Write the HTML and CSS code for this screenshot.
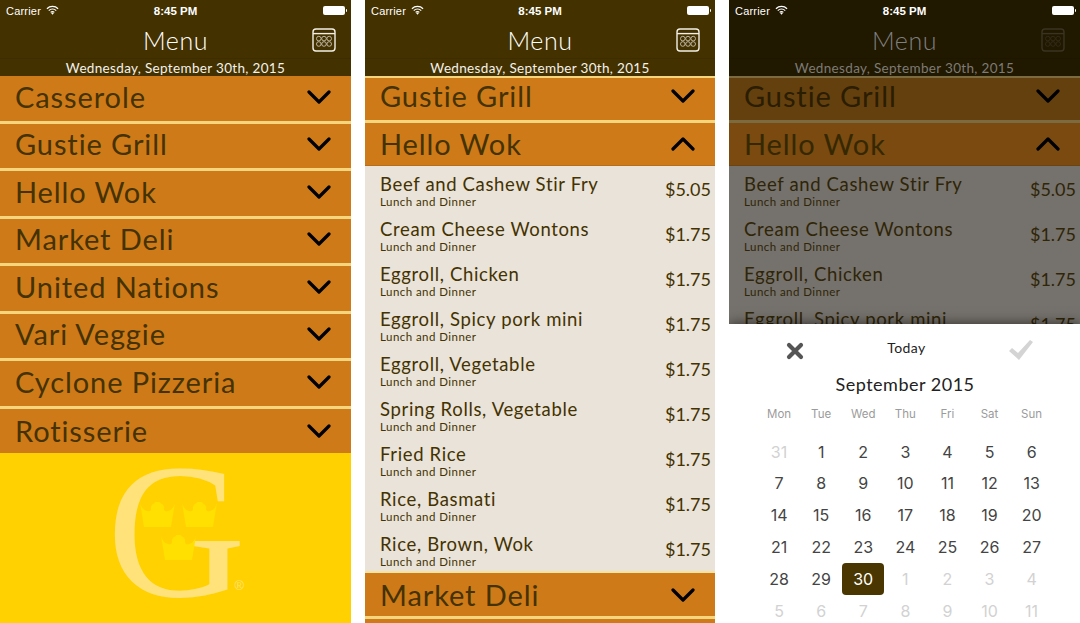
FILE: index.html
```html
<!DOCTYPE html>
<html lang="en">
<head>
<meta charset="utf-8">
<title>Menu</title>
<link rel="stylesheet" href="styles.css">
</head>
<body>
<svg class="defs" width="0" height="0" aria-hidden="true">
  <symbol id="chev-down" viewBox="0 0 24 14"><path d="M2 2 L12 12 L22 2" fill="none" stroke="#000" stroke-width="3.2" stroke-linecap="round" stroke-linejoin="round"/></symbol>
  <symbol id="chev-up" viewBox="0 0 24 14"><path d="M2 12 L12 2 L22 12" fill="none" stroke="#000" stroke-width="3.2" stroke-linecap="round" stroke-linejoin="round"/></symbol>
  <symbol id="wifi" viewBox="0 0 14 10"><path d="M1 3.6 A8.5 8.5 0 0 1 13 3.6 M3 5.6 A5.6 5.6 0 0 1 11 5.6 M5 7.5 A2.8 2.8 0 0 1 9 7.5" fill="none" stroke="#fff" stroke-width="1.3"/><path d="M7 10 L5.6 8.4 A2 2 0 0 1 8.4 8.4 Z" fill="#fff"/></symbol>
  <symbol id="cal" viewBox="0 0 24 24"><rect x="1" y="1" width="22" height="22" rx="3" fill="none" stroke="currentColor" stroke-width="1.4"/><path d="M1 5.6 H23" stroke="currentColor" stroke-width="1.4"/><g fill="none" stroke="currentColor" stroke-width=".8" opacity=".85"><circle cx="6.8" cy="10.6" r="2.3"/><circle cx="12" cy="10.6" r="2.3"/><circle cx="17.2" cy="10.6" r="2.3"/><circle cx="6.8" cy="16" r="2.3"/><circle cx="12" cy="16" r="2.3"/><circle cx="17.2" cy="16" r="2.3"/></g></symbol>
  <symbol id="crown" viewBox="0 0 35 26"><path d="M0 1 Q2 8 7 9 Q11 10 11 7 A4.4 4.4 0 0 1 14 1.6 A4.2 4.2 0 0 1 21 1.6 A4.4 4.4 0 0 1 24 7 Q24 10 28 9 Q33 8 35 1 L31 25 H4 Z" fill="#ffe000"/></symbol>
</svg>

<main class="screens">

  <section class="phone phone-wide">
    <header class="top">
      <div class="status"><span class="carrier">Carrier</span><svg class="wifi"><use href="#wifi"/></svg><span class="time">8:45 PM</span><span class="battery"></span></div>
      <div class="nav"><h1 class="nav-title">Menu</h1><svg class="cal-icon"><use href="#cal"/></svg></div>
      <div class="date">Wednesday, September 30th, 2015</div>
    </header>
    <div class="places">
      <div class="place"><span class="place-name">Casserole</span><svg class="chev"><use href="#chev-down"/></svg></div>
      <div class="place"><span class="place-name">Gustie Grill</span><svg class="chev"><use href="#chev-down"/></svg></div>
      <div class="place"><span class="place-name">Hello Wok</span><svg class="chev"><use href="#chev-down"/></svg></div>
      <div class="place"><span class="place-name">Market Deli</span><svg class="chev"><use href="#chev-down"/></svg></div>
      <div class="place"><span class="place-name">United Nations</span><svg class="chev"><use href="#chev-down"/></svg></div>
      <div class="place"><span class="place-name">Vari Veggie</span><svg class="chev"><use href="#chev-down"/></svg></div>
      <div class="place"><span class="place-name">Cyclone Pizzeria</span><svg class="chev"><use href="#chev-down"/></svg></div>
      <div class="place place-last"><span class="place-name">Rotisserie</span><svg class="chev"><use href="#chev-down"/></svg></div>
    </div>
    <div class="brand">
      <svg class="logo" viewBox="95 454 160 169" aria-label="Gustavus logo">
        <text class="logo-g" x="107" y="597">G</text>
        <text class="logo-r" x="234.500" y="591">®</text>
        <use href="#crown" x="140" y="503" width="35" height="26"/>
        <use href="#crown" x="182" y="503" width="35" height="26"/>
        <use href="#crown" x="161" y="536" width="35" height="26"/>
      </svg>
    </div>
  </section>

  <section class="phone phone-narrow">
    <header class="top">
      <div class="status"><span class="carrier">Carrier</span><svg class="wifi"><use href="#wifi"/></svg><span class="time">8:45 PM</span><span class="battery"></span></div>
      <div class="nav"><h1 class="nav-title">Menu</h1><svg class="cal-icon"><use href="#cal"/></svg></div>
      <div class="date">Wednesday, September 30th, 2015</div>
    </header>
    <div class="places places-scrolled">
      <div class="place place-clipped"><span class="place-name">Gustie Grill</span><svg class="chev"><use href="#chev-down"/></svg></div>
      <div class="place place-open"><span class="place-name">Hello Wok</span><svg class="chev"><use href="#chev-up"/></svg></div>
      <ul class="items">
        <li class="item"><div class="item-text"><span class="item-name">Beef and Cashew Stir Fry</span><span class="item-meal">Lunch and Dinner</span></div><span class="price">$5.05</span></li>
        <li class="item"><div class="item-text"><span class="item-name">Cream Cheese Wontons</span><span class="item-meal">Lunch and Dinner</span></div><span class="price">$1.75</span></li>
        <li class="item"><div class="item-text"><span class="item-name">Eggroll, Chicken</span><span class="item-meal">Lunch and Dinner</span></div><span class="price">$1.75</span></li>
        <li class="item"><div class="item-text"><span class="item-name">Eggroll, Spicy pork mini</span><span class="item-meal">Lunch and Dinner</span></div><span class="price">$1.75</span></li>
        <li class="item"><div class="item-text"><span class="item-name">Eggroll, Vegetable</span><span class="item-meal">Lunch and Dinner</span></div><span class="price">$1.75</span></li>
        <li class="item"><div class="item-text"><span class="item-name">Spring Rolls, Vegetable</span><span class="item-meal">Lunch and Dinner</span></div><span class="price">$1.75</span></li>
        <li class="item"><div class="item-text"><span class="item-name">Fried Rice</span><span class="item-meal">Lunch and Dinner</span></div><span class="price">$1.75</span></li>
        <li class="item"><div class="item-text"><span class="item-name">Rice, Basmati</span><span class="item-meal">Lunch and Dinner</span></div><span class="price">$1.75</span></li>
        <li class="item"><div class="item-text"><span class="item-name">Rice, Brown, Wok</span><span class="item-meal">Lunch and Dinner</span></div><span class="price">$1.75</span></li>
      </ul>
      <div class="place place-after"><span class="place-name">Market Deli</span><svg class="chev"><use href="#chev-down"/></svg></div>
      <div class="place"></div>
    </div>
  </section>

  <section class="phone phone-wide">
    <header class="top top-dim">
      <div class="status"><span class="carrier">Carrier</span><svg class="wifi"><use href="#wifi"/></svg><span class="time">8:45 PM</span><span class="battery"></span></div>
      <div class="nav"><h1 class="nav-title">Menu</h1><svg class="cal-icon"><use href="#cal"/></svg></div>
      <div class="date">Wednesday, September 30th, 2015</div>
    </header>
    <div class="places places-scrolled places-dim">
      <div class="place place-clipped"><span class="place-name">Gustie Grill</span><svg class="chev"><use href="#chev-down"/></svg></div>
      <div class="place place-open"><span class="place-name">Hello Wok</span><svg class="chev"><use href="#chev-up"/></svg></div>
      <ul class="items">
        <li class="item"><div class="item-text"><span class="item-name">Beef and Cashew Stir Fry</span><span class="item-meal">Lunch and Dinner</span></div><span class="price">$5.05</span></li>
        <li class="item"><div class="item-text"><span class="item-name">Cream Cheese Wontons</span><span class="item-meal">Lunch and Dinner</span></div><span class="price">$1.75</span></li>
        <li class="item"><div class="item-text"><span class="item-name">Eggroll, Chicken</span><span class="item-meal">Lunch and Dinner</span></div><span class="price">$1.75</span></li>
        <li class="item"><div class="item-text"><span class="item-name">Eggroll, Spicy pork mini</span><span class="item-meal">Lunch and Dinner</span></div><span class="price">$1.75</span></li>
      </ul>
    </div>
    <aside class="sheet">
      <div class="sheet-bar">
        <svg class="sheet-x" viewBox="0 0 18 18"><path d="M3 3 L15 15 M15 3 L3 15" fill="none" stroke="#555" stroke-width="4.200" stroke-linecap="round"/></svg>
        <span class="sheet-today">Today</span>
        <svg class="sheet-check" viewBox="0 0 24 20"><path d="M0 11 L3 8 L9 13 L21 0 L24 2 L10 20 Z" fill="#d4d4d4"/></svg>
      </div>
      <div class="month">September 2015</div>
      <div class="cal-grid">
        <span class="wd">Mon</span><span class="wd">Tue</span><span class="wd">Wed</span><span class="wd">Thu</span><span class="wd">Fri</span><span class="wd">Sat</span><span class="wd">Sun</span>
        <span class="day day-off">31</span><span class="day">1</span><span class="day">2</span><span class="day">3</span><span class="day">4</span><span class="day">5</span><span class="day">6</span>
        <span class="day">7</span><span class="day">8</span><span class="day">9</span><span class="day">10</span><span class="day">11</span><span class="day">12</span><span class="day">13</span>
        <span class="day">14</span><span class="day">15</span><span class="day">16</span><span class="day">17</span><span class="day">18</span><span class="day">19</span><span class="day">20</span>
        <span class="day">21</span><span class="day">22</span><span class="day">23</span><span class="day">24</span><span class="day">25</span><span class="day">26</span><span class="day">27</span>
        <span class="day">28</span><span class="day">29</span><span class="day day-sel">30</span><span class="day day-off">1</span><span class="day day-off">2</span><span class="day day-off">3</span><span class="day day-off">4</span>
        <span class="day day-off">5</span><span class="day day-off">6</span><span class="day day-off">7</span><span class="day day-off">8</span><span class="day day-off">9</span><span class="day day-off">10</span><span class="day day-off">11</span>
      </div>
    </aside>
  </section>

</main>
</body>
</html>
```

FILE: styles.css
```css
* { box-sizing: border-box; }
html, body { margin: 0; padding: 0; background: #fff; }
body { width: 1080px; height: 623px; overflow: hidden; font-family: "Lato", "Noto Sans", sans-serif; }
.defs { display: block; height: 0; }

.screens { display: flex; gap: 14px; height: 623px; }
.phone { position: relative; height: 623px; overflow: hidden; display: flex; flex-direction: column; background: #ffd100; }
.phone-wide { width: 351px; }
.phone-narrow { width: 350px; }

/* header */
.top { flex: none; height: 76px; background: #433100; color: #fff; position: relative; z-index: 1; }
.status { height: 21px; position: relative; display: flex; align-items: center; padding: 0 6px; font-family: "Liberation Sans", sans-serif; font-size: 11px; color: #fff; }
.carrier { letter-spacing: .2px; }
.wifi { width: 13px; height: 10px; margin-left: 5px; margin-top: -2px; }
.time { position: absolute; left: 0; right: 0; text-align: center; font-weight: 700; font-size: 11.500px; }
.battery { position: absolute; right: 6px; top: 6px; width: 22px; height: 9px; background: #fff; border-radius: 2px; }
.battery::after { content: ""; position: absolute; right: -2px; top: 3px; width: 1.500px; height: 3px; background: #fff; border-radius: 0 1px 1px 0; }
.nav { height: 38px; position: relative; display: flex; align-items: center; justify-content: center; border-bottom: 1px solid #3d2d00; }
.nav-title { margin: 0; font-size: 25px; font-weight: 300; line-height: 30px; letter-spacing: .6px; }
.cal-icon { position: absolute; right: 15px; top: 7px; width: 24px; height: 24px; color: #f3efe6; }
.date { height: 17px; line-height: 18px; text-align: center; font-size: 13.500px; letter-spacing: .33px; color: #f5f2ea; }

/* dimmed header in the third screen */
.top-dim { background: #211800; }
.top-dim .nav { border-bottom-color: #1e1600; }
.top-dim .nav-title { color: #7f7f7f; }
.top-dim .date { color: #7d7b76; }
.top-dim .cal-icon { color: #3a3322; }

/* restaurant rows */
.places { flex: none; }
.place { height: 47.500px; padding: 0 20px 3px 15px; background: #cf7a19; border-bottom: 3px solid #f6d67c; display: flex; align-items: center; justify-content: space-between; }
.place-last { height: 44.500px; padding-bottom: 0; border-bottom: 0; }
.place-name { font-size: 29px; font-weight: 400; letter-spacing: .9px; color: #443200; line-height: 36px; }
.chev { width: 24px; height: 14px; flex: none; }

.places-scrolled { border-top: 2px solid #f6d67c; }
.place-clipped { height: 45px; padding-bottom: 0; }
.place-clipped .place-name { margin-top: -6px; }
.place-clipped .chev { margin-top: -6px; }
.place-open { height: 43px; padding-bottom: 0; border-bottom: 1px solid #b46f1e; }
.place-open .place-name, .place-open .chev { margin-top: 0; }
.place-after { height: 48px; border-top: 2px solid #f6e39f; padding-bottom: 0; }

/* menu items */
.items { margin: 0; padding: 0; list-style: none; background: #e9e3d9; }
.item { height: 45px; padding: 8px 4px 0 15px; display: flex; justify-content: space-between; color: #443200; }
.item-text { display: flex; flex-direction: column; }
.item-name { font-size: 18.500px; line-height: 21px; letter-spacing: .65px; }
.item-meal { font-size: 11.500px; line-height: 13px; letter-spacing: .45px; }
.price { font-size: 18px; line-height: 30px; }

/* dimmed list */
.places-dim { border-top-color: #7b6b3e; }
.places-dim .place { background: #65400f; border-bottom-color: #7b6b3e; }
.places-dim .place-open { background: #7a4a10; border-bottom-color: #6b4412; }
.places-dim .place-clipped .place-name { color: #2a1d00; }
.places-dim .place-open .place-name { color: #352800; }
.places-dim .items { background: #75716c; }
.places-dim .item { color: #2f2507; }

/* logo */
.brand { flex: 1; min-height: 0; }
.logo { display: block; width: 160px; height: 169px; margin-left: 95px; }
.logo-g { font-family: "Liberation Serif", serif; font-size: 192px; fill: #ffe27a; }
.logo-r { font-family: "Liberation Sans", sans-serif; font-size: 13px; fill: #ffe27a; }

/* date picker */
.sheet { position: absolute; left: 0; right: 0; top: 324px; bottom: 0; background: #fff; box-shadow: 0 0 12px rgba(0, 0, 0, .6); padding: 0 27px 0 29px; z-index: 2; }
.sheet-bar { height: 48px; display: flex; align-items: center; justify-content: space-between; position: relative; padding: 3px 21px 0 27px; margin: 0 0 0 29px; margin-left: 0; }
.sheet-x { width: 18px; height: 18px; margin-top: 3px; margin-left: 1px; }
.sheet-today { font-size: 14px; letter-spacing: .4px; color: #222; margin-top: -4px; }
.sheet-check { width: 24px; height: 20px; margin-right: -1px; }
.month { text-align: center; font-size: 18px; line-height: 24px; letter-spacing: .5px; color: #222; margin-top: 0; height: 32px; margin-left: -1px; }
.cal-grid { display: grid; grid-template-columns: repeat(7, 42.100px); grid-auto-rows: 31.800px; font-family: "Inter", "Liberation Sans", sans-serif; }
.wd, .day { display: flex; align-items: center; justify-content: center; }
.wd { font-size: 11.500px; color: #9b9b9b; height: 20px; }
.day { font-size: 16px; color: #444; }
.day-off { color: #d2d2d2; }
.day-sel { background: #4a3600; color: #fff; border-radius: 4px; }
```
